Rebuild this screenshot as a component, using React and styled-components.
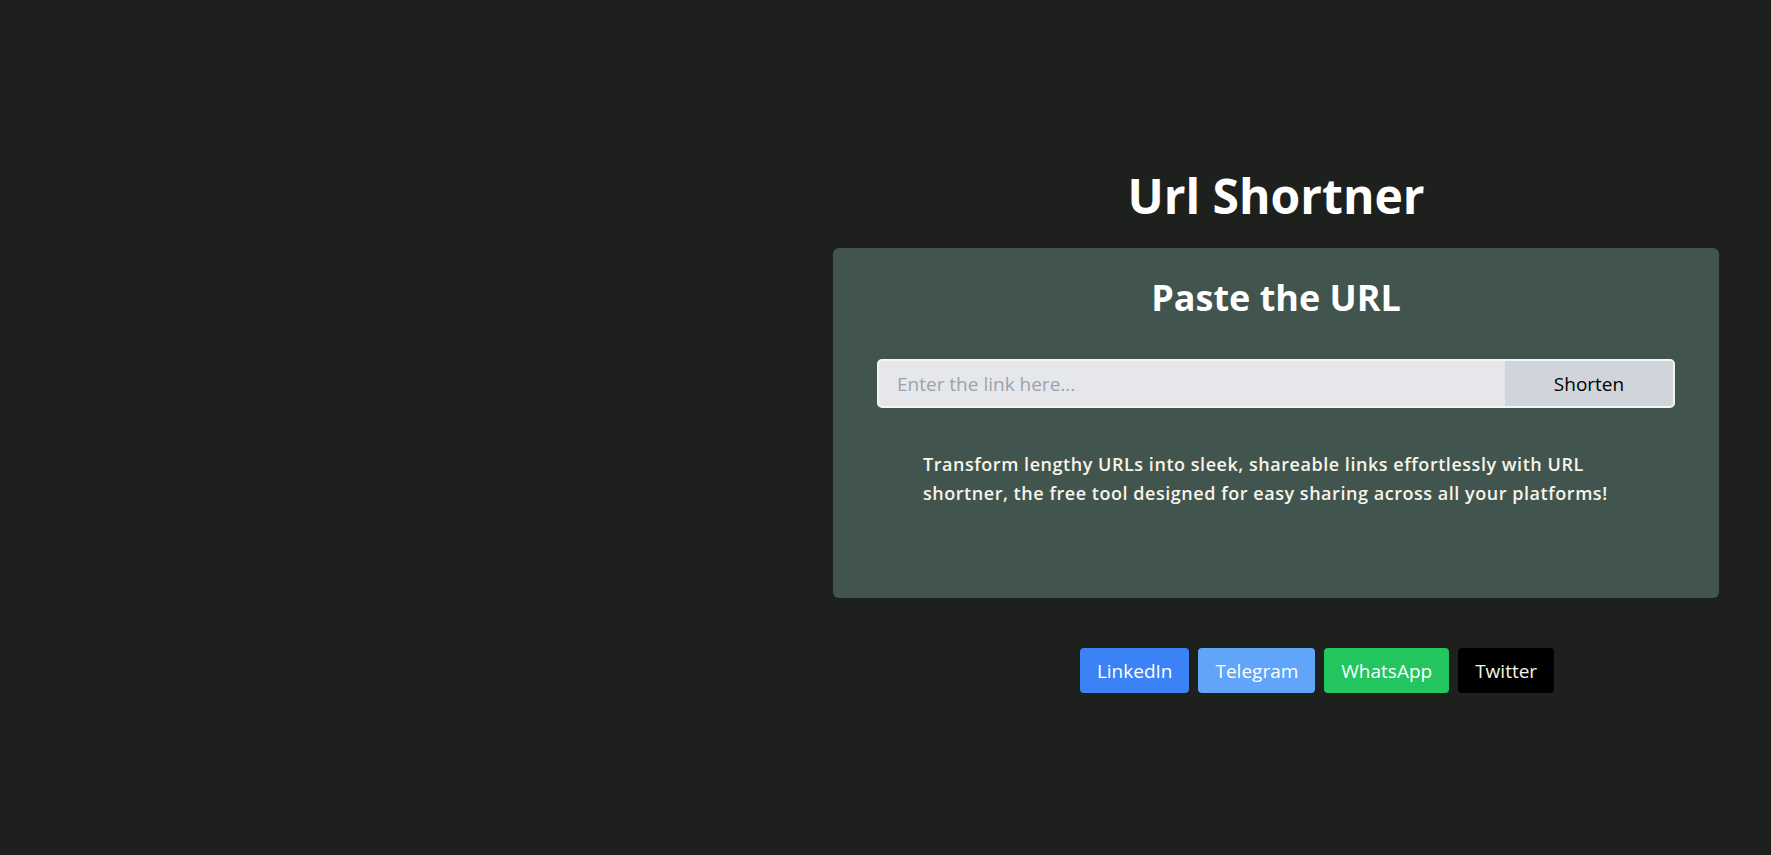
import React from "react";
import styled, { createGlobalStyle } from "styled-components";

const GlobalStyle = createGlobalStyle`
  * { box-sizing: border-box; }
  body {
    margin: 0;
    background: #1e201e;
    font-family: "Segoe UI", "Open Sans", "Noto Sans", sans-serif;
  }
`;

const Page = styled.main`
  min-height: 100vh;
  display: flex;
  justify-content: flex-end;
  align-items: center;
  padding: 10px 52px 0 0;
`;

const Column = styled.section`
  width: 886px;
  display: flex;
  flex-direction: column;
  align-items: center;
`;

const Title = styled.h1`
  margin: 0 0 28px;
  font-size: 48px;
  line-height: 48px;
  font-weight: 700;
  color: #ffffff;
`;

const Card = styled.div`
  width: 100%;
  background: #41544e;
  border-radius: 6px;
  padding: 30px 44px 90px;
  display: flex;
  flex-direction: column;
  align-items: center;
`;

const CardTitle = styled.h2`
  margin: 0 0 41px;
  font-size: 36px;
  line-height: 40px;
  font-weight: 700;
  color: #ffffff;
`;

const Form = styled.form`
  width: 100%;
  height: 49px;
  display: flex;
  border: 2px solid #f3f4f6;
  border-radius: 5px;
  overflow: hidden;
  background: #e5e7eb;
`;

const Input = styled.input`
  flex: 1;
  border: none;
  outline: none;
  background: transparent;
  padding: 0 18px;
  font-family: inherit;
  font-size: 19px;
  color: #111827;
  &::placeholder {
    color: #9ca3af;
  }
`;

const ShortenButton = styled.button`
  width: 168px;
  border: none;
  background: #d1d5db;
  font-family: inherit;
  font-size: 19px;
  color: #000000;
  cursor: pointer;
`;

const Blurb = styled.p`
  margin: 42px 0 0;
  padding: 0 46px;
  font-size: 18px;
  line-height: 29px;
  font-weight: 600;
  letter-spacing: 0.03em;
  color: #f7f4ea;
`;

const ShareRow = styled.div`
  display: flex;
  justify-content: center;
  gap: 9px;
  margin-top: 50px;
  padding-left: 82px;
`;

const ShareButton = styled.a`
  display: inline-flex;
  align-items: center;
  height: 45px;
  padding: 0 17px;
  border-radius: 4px;
  font-size: 19px;
  color: ${(p) => p.$fg || "#ffffff"};
  background: ${(p) => p.$bg};
  text-decoration: none;
`;

const shares = [
  { label: "LinkedIn", bg: "#3b82f6" },
  { label: "Telegram", bg: "#60a5fa" },
  { label: "WhatsApp", bg: "#22c55e" },
  { label: "Twitter", bg: "#000000", fg: "#f7f4ea" },
];

export default function App() {
  return (
    <>
      <GlobalStyle />
      <Page>
        <Column>
          <Title>Url Shortner</Title>
          <Card>
            <CardTitle>Paste the URL</CardTitle>
            <Form onSubmit={(e) => e.preventDefault()}>
              <Input type="text" placeholder="Enter the link here..." />
              <ShortenButton type="submit">Shorten</ShortenButton>
            </Form>
            <Blurb>
              Transform lengthy URLs into sleek, shareable links effortlessly with URL
              shortner, the free tool designed for easy sharing across all your platforms!
            </Blurb>
          </Card>
          <ShareRow>
            {shares.map((s) => (
              <ShareButton key={s.label} href="#" $bg={s.bg} $fg={s.fg}>
                {s.label}
              </ShareButton>
            ))}
          </ShareRow>
        </Column>
      </Page>
    </>
  );
}
